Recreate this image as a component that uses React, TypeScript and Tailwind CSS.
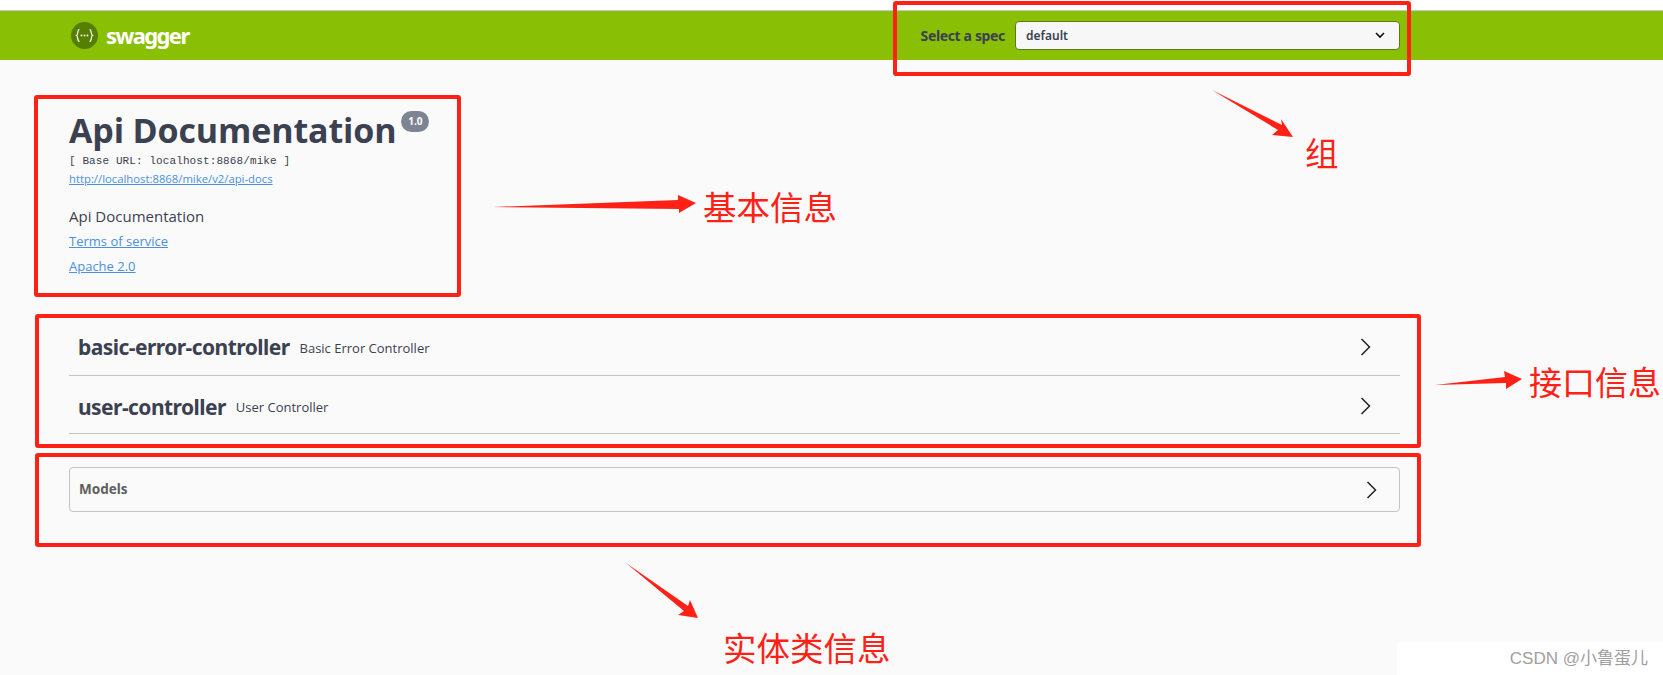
import React from "react";

const arrows = [
  "493,207 678,200 678,195 696,203 679,213 679,209",
  "1435,385 1505,377 1504,371 1522,379 1506,389 1506,383",
  "1212,90 1282,125 1281,119 1293,137 1272,135 1278,130",
  "626,563 688,606 690,600 698,618 678,615 684,611",
];

const Chevron = ({ className }: { className?: string }) => (
  <svg className={className} width="11" height="18" viewBox="0 0 11 18" fill="none">
    <path d="M1.5 1 L9.5 9 L1.5 17" stroke="#222" strokeWidth="1.5" />
  </svg>
);

const TagRow = ({ name, desc }: { name: string; desc: string }) => (
  <div className="flex items-center h-[58px] border-b border-[#c4c4c4] pt-[6px] pl-[9px] pr-[29px] first:h-[61px]">
    <h4 className="text-[21px] font-bold text-[#3b4151] font-['Noto_Sans',sans-serif] tracking-[-0.55px]">{name}</h4>
    <span className="ml-[10px] mt-[1px] text-[13px] text-[#3b4151] font-['Open_Sans',sans-serif]">{desc}</span>
    <Chevron className="ml-auto -mt-[3px]" />
  </div>
);

const Note = ({ className, children }: { className: string; children: React.ReactNode }) => (
  <div className={`absolute text-[#ff2116] leading-none font-['Noto_Sans_CJK_SC',sans-serif] whitespace-nowrap ${className}`}>
    {children}
  </div>
);

export default function App() {
  return (
    <div className="relative h-[675px] overflow-hidden bg-[#fafafa] font-['Open_Sans',sans-serif]">
      <div className="h-[11px] bg-white border-b border-[#c8c8c8]" />

      {/* top bar */}
      <header className="flex items-center h-[49px] bg-[#89bf04] pl-[71px] pr-[263px]">
        <svg width="27" height="27" viewBox="0 0 27 27" fill="none">
          <circle cx="13.5" cy="13.5" r="13.5" fill="#547f00" />
          <path d="M8.5 7.5 C6 7.5 7.5 12.5 5.5 13.5 C7.5 14.5 6 19.5 8.5 19.5 M18.5 7.5 C21 7.5 19.5 12.5 21.5 13.5 C19.5 14.5 21 19.5 18.5 19.5" stroke="#fff" strokeWidth="1.2" />
          <circle cx="10.5" cy="13.5" r="0.9" fill="#fff" />
          <circle cx="13.5" cy="13.5" r="0.9" fill="#fff" />
          <circle cx="16.5" cy="13.5" r="0.9" fill="#fff" />
        </svg>
        <span className="ml-[8px] text-[22px] font-bold text-white tracking-[-1.6px] font-['Noto_Sans',sans-serif]">swagger</span>
        <span className="ml-auto text-[14px] font-bold text-[#3b4151] font-['Noto_Sans',sans-serif] tracking-[-0.35px]">Select a spec</span>
        <div className="ml-[10px] flex items-center w-[385px] h-[29px] rounded-[4px] border border-[#5a7a12] bg-[#f7f7f7] pl-[10px] pr-[14px]">
          <span className="text-[12px] font-semibold text-[#3b4151] font-['Noto_Sans',sans-serif]">default</span>
          <svg className="ml-auto" width="10" height="7" viewBox="0 0 10 7" fill="none">
            <path d="M1 1 L5 5 L9 1" stroke="#111" strokeWidth="1.6" />
          </svg>
        </div>
      </header>

      <main className="w-[1331px] ml-[69px]">
        {/* info block */}
        <section className="pt-[48px]">
          <div className="flex items-start">
            <h2 className="text-[34px] leading-[45px] font-bold text-[#3b4151] tracking-[-0.15px]">Api Documentation</h2>
            <span className="ml-[5px] mt-[3px] flex items-center justify-center w-[28px] h-[21px] rounded-full bg-[#7d8492] text-[10px] font-bold text-white">1.0</span>
          </div>
          <div className="mt-[1px] text-[11px] leading-[14px] text-[#3b4151] font-['Liberation_Mono',monospace] tracking-[0.1px]">[ Base URL: localhost:8868/mike ]</div>
          <a className="block mt-[2px] text-[11.3px] leading-[17px] text-[#4990e2] underline">http://localhost:8868/mike/v2/api-docs</a>
          <p className="mt-[19px] text-[15px] leading-[20px] text-[#3b4151]">Api Documentation</p>
          <a className="block mt-[7px] text-[13px] leading-[17px] text-[#4990e2] underline">Terms of service</a>
          <a className="block mt-[8px] text-[13px] leading-[17px] text-[#4990e2] underline">Apache 2.0</a>
        </section>

        {/* controllers */}
        <section className="mt-[40px]">
          <TagRow name="basic-error-controller" desc="Basic Error Controller" />
          <TagRow name="user-controller" desc="User Controller" />
        </section>

        {/* models */}
        <section className="mt-[33px] flex items-center h-[45px] rounded-[4px] border border-[#c4c4c4] pl-[9px] pr-[22px]">
          <h4 className="text-[13.5px] font-bold text-[#606060] font-['Noto_Sans',sans-serif]">Models</h4>
          <Chevron className="ml-auto" />
        </section>
      </main>

      {/* annotations drawn over the screenshot */}
      <div className="absolute left-[893px] top-[1px] w-[518px] h-[75px] rounded-[3px] border-[4px] border-[#ff2116]" />
      <div className="absolute left-[34px] top-[95px] w-[427px] h-[202px] rounded-[3px] border-[4px] border-[#ff2116]" />
      <div className="absolute left-[35px] top-[314px] w-[1386px] h-[134px] rounded-[3px] border-[4px] border-[#ff2116]" />
      <div className="absolute left-[35px] top-[453px] w-[1386px] h-[94px] rounded-[3px] border-[4px] border-[#ff2116]" />

      <svg className="absolute inset-0 pointer-events-none" width="1663" height="675">
        {arrows.map((points) => (
          <polygon key={points} points={points} fill="#ff2116" />
        ))}
      </svg>

      <Note className="left-[1305px] top-[135px] text-[33.5px]">组</Note>
      <Note className="left-[703px] top-[189px] text-[33.5px]">基本信息</Note>
      <Note className="left-[1529px] top-[365px] text-[33px]">接口信息</Note>
      <Note className="left-[723px] top-[630px] text-[33.5px]">实体类信息</Note>

      {/* watermark */}
      <div className="absolute right-0 bottom-0 flex items-center justify-end w-[266px] h-[33px] bg-white pr-[15px] text-[17px] text-[#a0a0a0] font-['Liberation_Sans','Noto_Sans_CJK_SC',sans-serif]">
        CSDN @小鲁蛋儿
      </div>
    </div>
  );
}
